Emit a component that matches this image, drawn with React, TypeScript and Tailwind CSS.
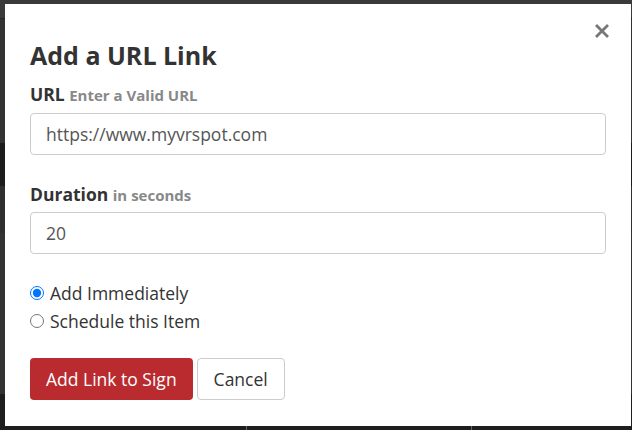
import React from 'react';

const font = { fontFamily: '"Open Sans", "Noto Sans", sans-serif' };

const App: React.FC = () => {
  return (
    <div className="relative w-[632px] h-[430px] overflow-hidden bg-[#333]" style={font}>
      {/* page behind the overlay */}
      <div className="flex flex-col h-full">
        <div className="h-[20px] bg-[#3a3a3a] border-b border-[#262626]"></div>
        <div className="h-[127px] bg-[#333]"></div>
        <div className="h-[44px] bg-[#1c1c1c]"></div>
        <div className="h-[48px] bg-[#2f2f2f]"></div>
        <div className="h-[166px] bg-[#333]"></div>
        <div className="flex-1 bg-[#1e1e1e] flex items-start pt-[12px] text-[16px] leading-[24px] text-[#777]">
          <div className="w-[247px] pl-[7px] border-r border-[#666]">Start Time</div>
          <div className="w-[225px] pl-[10px] border-r border-[#666]">End Time</div>
          <div className="pl-[10px]">Duration</div>
        </div>
      </div>

      {/* modal */}
      <div className="absolute left-[5px] top-[4px] w-[626px] h-[422px] bg-white px-[25px] pt-[35px]">
        <button className="absolute right-[22px] top-[20px] w-[14px] h-[14px] text-[#777]">
          <svg viewBox="0 0 14 14" width="14" height="14" className="block">
            <path d="M2 2 L12 12 M12 2 L2 12" stroke="currentColor" strokeWidth="2.8" strokeLinecap="square" />
          </svg>
        </button>

        <h1 className="text-[25px] leading-[32px] font-bold text-[#333]">Add a URL Link</h1>

        <label className="block mt-[11px] text-[17.5px] leading-[24px] font-bold text-[#333]">
          URL <span className="text-[15px] text-[#888]">Enter a Valid URL</span>
        </label>
        <input
          defaultValue="https://www.myvrspot.com"
          className="mt-[6px] block w-full h-[42px] px-[15px] border border-[#ccc] rounded-[4px] text-[17.5px] text-[#555] outline-none"
        />

        <label className="block mt-[27px] text-[17.5px] leading-[24px] font-bold text-[#333]">
          Duration <span className="text-[15px] text-[#888]">in seconds</span>
        </label>
        <input
          defaultValue="20"
          className="mt-[5px] block w-full h-[42px] px-[15px] border border-[#ccc] rounded-[4px] text-[17.5px] text-[#555] outline-none"
        />

        <div className="mt-[25px] flex flex-col text-[17.5px] leading-[28px] text-[#333]">
          <label className="flex items-center gap-[6px]">
            <input type="radio" name="when" defaultChecked className="m-0 w-[14px] h-[14px] accent-[#0075ff]" />
            Add Immediately
          </label>
          <label className="flex items-center gap-[6px]">
            <input type="radio" name="when" className="m-0 w-[14px] h-[14px]" />
            Schedule this Item
          </label>
        </div>

        <div className="mt-[23px] flex gap-[4px]">
          <button className="h-[42px] px-[16px] rounded-[4px] bg-[#b92b2f] text-white text-[17.5px]">
            Add Link to Sign
          </button>
          <button className="h-[42px] px-[16px] rounded-[4px] border border-[#ccc] bg-white text-[#333] text-[17.5px]">
            Cancel
          </button>
        </div>
      </div>
    </div>
  );
};

export default App;
